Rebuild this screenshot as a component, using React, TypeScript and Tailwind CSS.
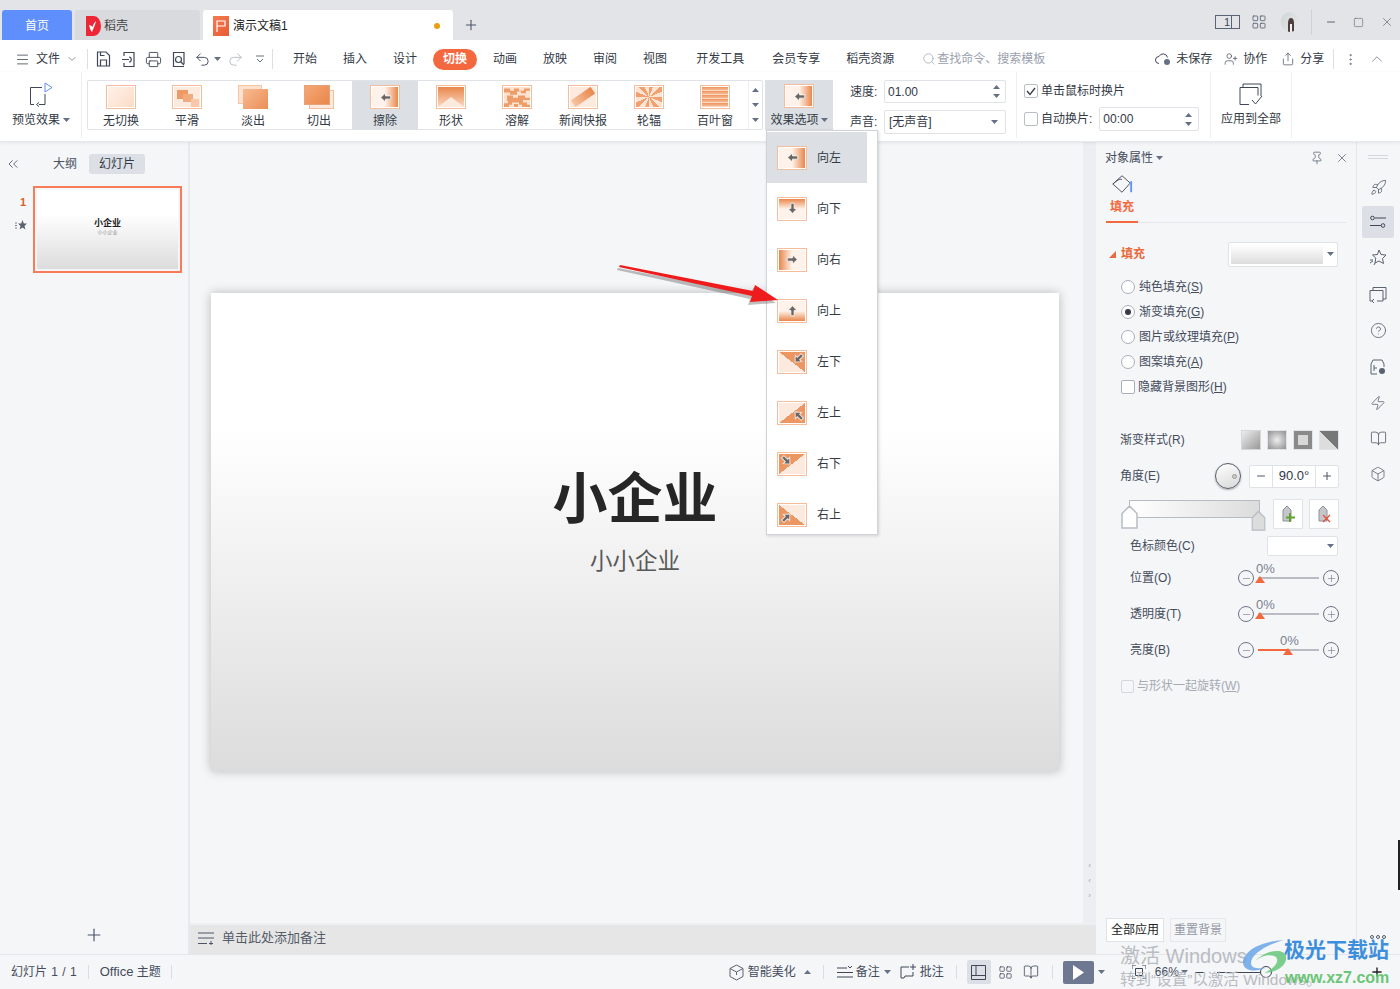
import type { ReactNode } from "react";
import {
  ChevronDown, ChevronUp, ChevronsLeft, Menu, Minus, Plus, Printer, Redo2, Search, Square, Undo2, X,
  UserPlus, Share, MoreVertical, Pin, Rocket, HelpCircle, Zap, Box, LayoutGrid, BookOpen,
} from "lucide-react";

const ICON = "#3f4757";

function Caret({ up, className = "" }: { up?: boolean; className?: string }) {
  return (
    <svg width="7" height="4" viewBox="0 0 7 4" className={className}>
      <path d={up ? "M0 4h7L3.5 0z" : "M0 0h7L3.5 4z"} fill="#667085" />
    </svg>
  );
}

function Thumb({ bg, children }: { bg: string; children?: ReactNode }) {
  return (
    <div className="w-[30px] h-[24px] border border-[#f5bd9b] bg-white p-px shrink-0">
      <div className={`w-full h-full relative flex items-center justify-center overflow-hidden ${bg}`}>{children}</div>
    </div>
  );
}

function Arrow({ rot }: { rot: string }) {
  return (
    <svg width="13" height="13" viewBox="0 0 16 16" className={rot}>
      <path d="M2 8 8 2.500v3.500h6.500v4H8v3.500z" fill="#6b6663" stroke="#fff" strokeOpacity=".8" strokeWidth="1.200" />
    </svg>
  );
}

const gallery: { label: string; thumb: ReactNode }[] = [
  { label: "无切换", thumb: <Thumb bg="bg-[linear-gradient(135deg,#fff1e8,#fbdcc8)]" /> },
  {
    label: "平滑",
    thumb: (
      <Thumb bg="bg-[#fdeadf]">
        <span className="absolute left-[3px] top-[3px] w-[11px] h-[9px] bg-[#ee9a66]" />
        <span className="absolute left-[9px] top-[7px] w-[10px] h-[8px] bg-[#f2ab7f]" />
        <span className="absolute left-[17px] top-[12px] w-[8px] h-[8px] bg-[#f8c8aa]" />
      </Thumb>
    ),
  },
  {
    label: "淡出",
    thumb: (
      <div className="relative w-[30px] h-[24px] shrink-0">
        <span className="absolute left-0 top-0 w-[24px] h-[19px] bg-[#fde1cf] border border-[#f7c4a4]" />
        <span className="absolute left-[5px] top-[4px] w-[25px] h-[20px] bg-[linear-gradient(135deg,#f8bb93,#ea8e55)]" />
      </div>
    ),
  },
  {
    label: "切出",
    thumb: (
      <div className="relative w-[30px] h-[24px] shrink-0">
        <span className="absolute left-[5px] top-[5px] w-[25px] h-[19px] bg-[#fdeadf] border border-[#f5bd9b]" />
        <span className="absolute left-0 top-0 w-[26px] h-[20px] bg-[linear-gradient(135deg,#f5a877,#e9874b)] border border-[#e9a178]" />
      </div>
    ),
  },
  { label: "擦除", thumb: <Thumb bg="bg-[linear-gradient(90deg,#fff2ea_50%,#e9874b)]"><Arrow rot="" /></Thumb> },
  {
    label: "形状",
    thumb: (
      <Thumb bg="bg-[linear-gradient(180deg,#e9874b,#fbd9c3)]">
        <svg width="26" height="20" viewBox="0 0 26 20" className="absolute inset-0"><path d="M0 20 13 10l13 10z" fill="#fdeadf" /></svg>
      </Thumb>
    ),
  },
  {
    label: "溶解",
    thumb: (
      <Thumb bg="bg-[#fde3d2]">
        <svg width="26" height="20" viewBox="0 0 26 26" preserveAspectRatio="none" className="absolute inset-0">
          <path d="M0 2h6v3h4V2h5v3h5V2h6v3h-4v3h-5V6h-4v4H6V7H0zM3 11h6v3h5v-3h7v3h5v3h-7v3h4v3h3v3h-8v-3h-3v-3H8v3H5v3H0v-5h4v-3H3zM10 22h4v4h-4z" fill="#ef9d68" />
        </svg>
      </Thumb>
    ),
  },
  {
    label: "新闻快报",
    thumb: (
      <Thumb bg="bg-[#fdeadf]">
        <span className="w-[24px] h-[8px] -rotate-[35deg] bg-[linear-gradient(90deg,#f8c4a3,#e9874b)]" />
      </Thumb>
    ),
  },
  {
    label: "轮辐",
    thumb: <Thumb bg="bg-[repeating-conic-gradient(#f2a070_0deg_22deg,#fde3d2_22deg_45deg)]" />,
  },
  {
    label: "百叶窗",
    thumb: <Thumb bg="bg-[repeating-linear-gradient(180deg,#ee945c_0px,#f6bb95_3px,#fff3ea_4px)]" />,
  },
];

const effects: { label: string; thumb: ReactNode }[] = [
  { label: "向左", thumb: <Thumb bg="bg-[linear-gradient(90deg,#fff2ea_50%,#e9874b)]"><Arrow rot="" /></Thumb> },
  { label: "向下", thumb: <Thumb bg="bg-[linear-gradient(0deg,#fff2ea_50%,#e9874b)]"><Arrow rot="-rotate-90" /></Thumb> },
  { label: "向右", thumb: <Thumb bg="bg-[linear-gradient(270deg,#fff2ea_50%,#e9874b)]"><Arrow rot="rotate-180" /></Thumb> },
  { label: "向上", thumb: <Thumb bg="bg-[linear-gradient(180deg,#fff2ea_50%,#e9874b)]"><Arrow rot="rotate-90" /></Thumb> },
  { label: "左下", thumb: <Thumb bg="bg-[linear-gradient(to_top_right,#fdeadf_50%,#ec9662_50%)]"><Arrow rot="-rotate-45 translate-x-[6px] -translate-y-[3px]" /></Thumb> },
  { label: "左上", thumb: <Thumb bg="bg-[linear-gradient(to_bottom_right,#fdeadf_50%,#ec9662_50%)]"><Arrow rot="rotate-45 translate-x-[6px] translate-y-[3px]" /></Thumb> },
  { label: "右下", thumb: <Thumb bg="bg-[linear-gradient(to_bottom_right,#ec9662_50%,#fdeadf_50%)]"><Arrow rot="rotate-[-135deg] -translate-x-[6px] -translate-y-[3px]" /></Thumb> },
  { label: "右上", thumb: <Thumb bg="bg-[linear-gradient(to_top_right,#ec9662_50%,#fdeadf_50%)]"><Arrow rot="rotate-[135deg] -translate-x-[6px] translate-y-[3px]" /></Thumb> },
];

function TabBar() {
  return (
    <div className="h-10 bg-[#e3e4e8] flex items-end shrink-0 relative pl-[2px]">
      <div className="w-[70px] h-[30px] pt-px bg-[#5f8efd] rounded-t-[3px] flex items-center justify-center text-white text-[12px]">首页</div>
      <div className="ml-[3px] w-[125px] h-[30px] pt-px bg-[#d9dade] rounded-t-[3px] flex items-center pl-[11px] gap-[3px] text-[12px] text-[#444]">
        <svg width="15" height="20" viewBox="0 0 15 20">
          <path d="M0 0h8a7 10 0 0 1 0 20H0z" fill="#ee2737" />
          <path d="M3 9c1 3 1 5 3 7 1-3 3-6 4-11-2 2-3 4-3.500 6-.5-1-2-2-3.500-2z" fill="#fff" />
        </svg>
        稻壳
      </div>
      <div className="ml-[3px] w-[250px] h-[30px] pt-px bg-white rounded-t-[3px] flex items-center pl-[10px] text-[12px] text-[#222]">
        <span className="w-4 h-[20px] bg-[linear-gradient(135deg,#f47b52,#e95b32)] flex items-center justify-center mr-[4px]">
          <svg width="10" height="12" viewBox="0 0 10 12"><path d="M1 12V1h8v5H1" fill="none" stroke="#fff" strokeWidth="1.200" /></svg>
        </span>
        演示文稿1
        <span className="ml-auto mr-[13px] w-[6px] h-[6px] rounded-full bg-[#e8a010]" />
      </div>
      <Plus size={16} color="#4b5468" strokeWidth={1.6} className="ml-[10px] mb-[7px]" />
      <div className="ml-auto h-10 flex items-center pr-[6px] pt-[4px]">
        <div className="relative w-[25px] h-[14px] border border-[#5b6475] text-[11px] leading-[12px] text-[#3f4757] pl-[8px] mr-[11px]">1<span className="absolute right-[3px] top-0 bottom-0 w-[5px] border-l border-[#5b6475]" /></div>
        <LayoutGrid size={16} color="#5b6475" strokeWidth={1.3} className="mr-[14px]" />
        <div className="w-[18px] h-[20px] rounded-full bg-[linear-gradient(120deg,#cfd5d6,#e7ebea)] flex items-end justify-center overflow-hidden mr-[12px]">
          <svg width="12" height="15" viewBox="0 0 12 15">
            <path d="M4 15V6c0-3 1-5 3-5s3 2 3 5v9H8V7H6v8z" fill="#4e403e" />
            <path d="M6 15V7h2v8z" fill="#f4f1ee" />
          </svg>
        </div>
        <span className="w-px h-[26px] bg-[#d0d2d8] mr-[13px]" />
        <Minus size={12} color="#5b6475" className="mr-[16px]" />
        <Square size={11} color="#5b6475" strokeWidth={1.3} className="mr-[16px]" />
        <X size={14} color="#5b6475" strokeWidth={1.2} />
      </div>
    </div>
  );
}

function MenuBar() {
  const tabs = ["开始", "插入", "设计", "切换", "动画", "放映", "审阅", "视图"];
  return (
    <div className="h-8 pt-[6px] bg-white flex items-center shrink-0 text-[12px] text-[#333a46]">
      <Menu size={15} color={ICON} strokeWidth={1.3} className="ml-[15px]" />
      <span className="ml-[6px]">文件</span>
      <ChevronDown size={12} color="#8a93a3" className="ml-[6px]" />
      <span className="ml-[9px] w-px h-5 bg-[#dcdfe4]" />
      <svg width="15" height="16" viewBox="0 0 15 16" className="ml-[8px]" fill="none" stroke={ICON} strokeWidth="1.200">
        <path d="M1.500 1h8.500l3.500 3.500V15h-12zM4.500 15V9h6v6M4.500 1v3.500h4" />
      </svg>
      <svg width="16" height="17" viewBox="0 0 16 17" className="ml-[10px]" fill="none" stroke={ICON} strokeWidth="1.200">
        <path d="M3 5V1.500h10v14H3V12M1 8.500h7M8 6c3 0 3 5 0 5" />
      </svg>
      <Printer size={17} color={ICON} strokeWidth={1.3} className="ml-[8px]" />
      <svg width="16" height="17" viewBox="0 0 16 17" className="ml-[9px]" fill="none" stroke={ICON} strokeWidth="1.200">
        <path d="M13 13V1.500H2.500v14H13" /><circle cx="7.500" cy="8.500" r="3" /><path d="m10 11 3 3" />
      </svg>
      <Undo2 size={17} color={ICON} strokeWidth={1.3} className="ml-[7px]" />
      <Caret className="ml-[3px]" />
      <Redo2 size={17} color="#b4b9c2" strokeWidth={1.3} className="ml-[6px]" />
      <svg width="8" height="8" viewBox="0 0 8 8" className="ml-[12px]" fill="none" stroke="#667085"><path d="M0 1h8M1 4l3 3 3-3" /></svg>
      <span className="ml-[8px] w-px h-5 bg-[#dcdfe4]" />
      <div className="ml-[20px] flex items-center gap-[26px]">
        {tabs.map((t) =>
          t === "切换" ? (
            <span key={t} className="-mx-[10px] w-[44px] h-[21px] rounded-full bg-[#f4683f] text-white font-bold flex items-center justify-center">{t}</span>
          ) : (
            <span key={t}>{t}</span>
          ),
        )}
      </div>
      <span className="ml-[29px]">开发工具</span>
      <span className="ml-[28px]">会员专享</span>
      <span className="ml-[26px]">稻壳资源</span>
      <Search size={14} color="#9aa1ad" strokeWidth={1.2} className="ml-[28px]" />
      <span className="ml-px text-[#9aa1ad]">查找命令、搜索模板</span>
      <svg width="16" height="14" viewBox="0 0 16 14" className="ml-[110px]" fill="none" stroke={ICON}>
        <path d="M4 11.500a3.500 3.500 0 0 1 0-7 4.500 4.500 0 0 1 8.500 1" /><circle cx="12" cy="10" r="3" fill="#667085" stroke="none" />
      </svg>
      <span className="ml-[5px]">未保存</span>
      <UserPlus size={14} color={ICON} strokeWidth={1.2} className="ml-[12px]" />
      <span className="ml-[5px]">协作</span>
      <Share size={14} color={ICON} strokeWidth={1.2} className="ml-[14px]" />
      <span className="ml-[5px]">分享</span>
      <span className="ml-[9px] w-px h-5 bg-[#dcdfe4]" />
      <MoreVertical size={15} color="#667085" strokeWidth={1.4} className="ml-[9px]" />
      <ChevronUp size={18} color="#667085" strokeWidth={1} className="ml-[10px]" />
    </div>
  );
}

function Spin({ className = "" }: { className?: string }) {
  return (
    <span className={`flex flex-col gap-[5px] ${className}`}>
      <Caret up />
      <Caret />
    </span>
  );
}

function Ribbon() {
  return (
    <div className="h-[70px] bg-white flex shrink-0 text-[12px] text-[#333a46] border-b border-[#e8e9ed] shadow-[0_1px_3px_rgba(0,0,0,0.08)] relative z-10">
      <div className="w-[82px] h-[66px] flex flex-col items-center border-r border-[#eceef1]">
        <svg width="26" height="26" viewBox="0 0 26 26" className="mt-[10px]" fill="none" stroke={ICON}>
          <path d="M14 5.500H2.500v17H6M17 12v10.500h-6" /><path d="m11 20.500-2.500 2 2.500 2" /><path d="M17 1v9l7-4.500z" stroke="#5f8efd" />
        </svg>
        <span className="mt-[3px] flex items-center gap-[3px] pl-px">预览效果<Caret /></span>
      </div>
      <div className="ml-[5px] mt-2 w-[676px] h-[50px] border border-[#dfe2e6] rounded-[2px] flex overflow-hidden">
        {gallery.map((g) => (
          <div key={g.label} className={`w-[66px] h-full shrink-0 flex flex-col items-center pt-1 ${g.label === "擦除" ? "bg-[#dce0e4]" : ""}`}>
            {g.thumb}
            <span className="mt-1 whitespace-nowrap leading-[16px]">{g.label}</span>
          </div>
        ))}
        <div className="ml-auto w-[14px] border-l border-[#eceef1] flex flex-col items-center justify-around py-[2px]">
          <Caret up />
          <Caret />
          <Caret />
        </div>
      </div>
      <div className="ml-[2px] mt-2 w-[68px] h-[50px] bg-[#dce0e4] flex flex-col items-center pt-1">
        <Thumb bg="bg-[linear-gradient(90deg,#fff2ea_50%,#e9874b)]"><Arrow rot="" /></Thumb>
        <span className="mt-1 flex items-center gap-[2px] leading-[16px]">效果选项<Caret /></span>
      </div>
      <div className="ml-[12px] w-[172px] h-[66px] border-r border-[#eceef1] pl-[5px] pt-2 flex flex-col gap-[7px]">
        <div className="flex items-center gap-[2px]">
          <span className="w-[32px]">速度:</span>
          <div className="w-[122px] h-[23px] border border-[#dfe2e6] rounded-[2px] flex items-center px-[3px] text-[#333a46]">
            01.00<Spin className="ml-auto mr-[2px]" />
          </div>
        </div>
        <div className="flex items-center gap-[2px]">
          <span className="w-[32px]">声音:</span>
          <div className="w-[122px] h-[24px] border border-[#dfe2e6] rounded-[2px] flex items-center px-[4px]">
            [无声音]<Caret className="ml-auto mr-[3px]" />
          </div>
        </div>
      </div>
      <div className="w-[194px] h-[66px] border-r border-[#eceef1] pl-[7px] pt-[9px] flex flex-col gap-[6px]">
        <div className="h-[20px] flex items-center gap-[3px]">
          <span className="w-[14px] h-[14px] border border-[#b9bec7] rounded-[2px] flex items-center justify-center">
            <svg width="10" height="9" viewBox="0 0 10 9" fill="none" stroke="#333a46" strokeWidth="1.300"><path d="m1 4 3 3.500L9 1" /></svg>
          </span>
          单击鼠标时换片
        </div>
        <div className="h-[24px] flex items-center gap-[3px]">
          <span className="w-[14px] h-[14px] border border-[#b9bec7] rounded-[2px]" />
          自动换片:
          <div className="ml-[4px] w-[100px] h-[24px] border border-[#dfe2e6] rounded-[2px] flex items-center px-[3px]">
            00:00<Spin className="ml-auto mr-[3px]" />
          </div>
        </div>
      </div>
      <div className="w-[81px] h-[66px] border-r border-[#eceef1] flex flex-col items-center pt-[10px]">
        <svg width="26" height="26" viewBox="0 0 26 26" fill="none" stroke={ICON}>
          <path d="M5 5V2h18v12M2 5.500h18v8M2 5.500v17h9" /><path d="m14 18 3.500 4L24 14" />
        </svg>
        <span className="mt-[2px]">应用到全部</span>
      </div>
    </div>
  );
}

function LeftPanel() {
  return (
    <div className="w-[190px] shrink-0 border-r-2 border-[#e8e9ee] flex flex-col text-[12px] text-[#4a5263]">
      <div className="h-[44px] flex items-center">
        <ChevronsLeft size={16} color="#3f4757" strokeWidth={1.2} className="ml-[5px]" />
        <span className="ml-[32px]">大纲</span>
        <span className="ml-[12px] w-[56px] h-[20px] bg-[#dce0e6] rounded-[3px] flex items-center justify-center text-[#333a46]">幻灯片</span>
      </div>
      <div className="flex">
        <div className="w-[33px] flex flex-col items-end pr-[6px] pt-[9px] gap-[11px]">
          <span className="font-bold text-[#d6611f] text-[11px] leading-[14px] pr-[1px]">1</span>
          <svg width="12" height="11" viewBox="0 0 12 11">
            <path d="m7.500 0 1.300 3.400 3.200.2-2.500 2.300.9 3.600-2.900-2-2.900 2 .9-3.600L3 3.600l3.200-.2z" fill="#5a6270" />
            <path d="M0 3h2M0 5.500h2M0 8h2" stroke="#5a6270" strokeWidth=".8" />
          </svg>
        </div>
        <div className="w-[149px] h-[87px] border-2 border-[#f97b58] p-[2px]">
          <div className="w-full h-full bg-[linear-gradient(180deg,#fff_30%,#dcdcdc)] flex flex-col items-center pt-[28px]">
            <span className="text-[9px] leading-[10px] font-bold text-[#222]">小企业</span>
            <span className="text-[5px] leading-[8px] text-[#888]">小小企业</span>
          </div>
        </div>
      </div>
      <div className="mt-auto h-[29px] flex justify-center items-start">
        <Plus size={20} color="#4b5468" strokeWidth={1.4} />
      </div>
    </div>
  );
}

function Slide() {
  return (
    <div className="flex-1 flex flex-col min-w-0 bg-[#f5f6f8]">
      <div className="flex-1 flex min-h-0">
        <div className="flex-1 pt-[151px] pl-[21px]">
          <div className="w-[848px] h-[478px] bg-[linear-gradient(180deg,#fff_28%,#dcdcdc)] shadow-[0_0_10px_rgba(0,0,0,0.25)] flex flex-col items-center pt-[171px]">
            <span className="text-[55px] leading-[70px] font-bold text-[#262626]">小企业</span>
            <span className="mt-[13px] text-[22.500px] leading-[30px] text-[#595959]">小小企业</span>
          </div>
        </div>
        <div className="w-[13px] bg-[#eceef2] flex flex-col items-center justify-end pb-[20px] text-[#a0a6b0] text-[8px] leading-[15px]">
          <span>‹</span><span>‹</span><span>›</span>
        </div>
      </div>
      <div className="h-[31px] pb-[3px] bg-[#e6e6e6] border-t-2 border-[#eeeff2] flex items-center pl-[8px] text-[13px] text-[#555c68]">
        <svg width="16" height="13" viewBox="0 0 16 13" fill="none" stroke="#4b5468"><path d="M0 1h16M0 6h16M0 11.500h9M13 9v4M11 11.500h4" /></svg>
        <span className="ml-[8px]">单击此处添加备注</span>
      </div>
    </div>
  );
}

function Radio({ on, children }: { on?: boolean; children: ReactNode }) {
  return (
    <div className="h-[25px] flex items-center">
      <span className="w-[14px] h-[14px] border border-[#a9aeb8] rounded-full bg-white flex items-center justify-center">
        {on && <span className="w-[6px] h-[6px] rounded-full bg-[#333a46]" />}
      </span>
      <span className="ml-[4px]">{children}</span>
    </div>
  );
}

function Stop({ fill }: { fill: string }) {
  return (
    <svg width="17" height="24" viewBox="0 0 17 24" className="shrink-0">
      <path d="M1 23V8.500L8.500 1 16 8.500V23z" fill={fill} stroke="#b8bcc2" strokeWidth="1.500" />
    </svg>
  );
}

function Sym({ c }: { c: ReactNode }) {
  return <span className="w-[16px] h-[16px] rounded-full border border-[#6b7488] flex items-center justify-center shrink-0">{c}</span>;
}

function SliderRow({ label, pos, fill }: { label: string; pos: number; fill?: boolean }) {
  return (
    <div className="h-[36px] flex items-center pl-[34px]">
      <span className="w-[108px]">{label}</span>
      <Sym c={<Minus size={11} color="#6b7488" strokeWidth={1.3} />} />
      <div className="relative w-[61px] h-[2px] bg-[#b9bcc4] mx-1">
        {fill && <span className="absolute left-0 top-0 h-full bg-[#f4683f]" style={{ width: pos }} />}
        <span className="absolute -top-[15px] text-[13px] text-[#7a8190] leading-[13px]" style={{ left: fill ? pos - 8 : pos - 4 }}>0%</span>
        <span className="absolute -top-px w-0 h-0 border-x-[5px] border-x-transparent border-b-[7px] border-b-[#f4683f]" style={{ left: pos - 5 }} />
      </div>
      <Sym c={<Plus size={11} color="#6b7488" strokeWidth={1.3} />} />
    </div>
  );
}

function RightPanel() {
  return (
    <div className="w-[261px] shrink-0 border-r border-[#e4e6ea] flex flex-col text-[12px] text-[#444c5c]">
      <div className="h-[31px] flex items-center pl-[9px] pt-[1px]">
        <span>对象属性</span>
        <Caret className="ml-[3px]" />
        <Pin size={14} color="#4b5468" strokeWidth={1.2} className="ml-auto" />
        <X size={14} color="#4b5468" strokeWidth={1.2} className="ml-[11px] mr-[7px]" />
      </div>
      <div className="ml-[10px] mr-[10px] border-b border-[#e4e6ea] h-[50px]">
        <div className="w-[32px] h-[50px] border-b-2 border-[#f4683f] flex flex-col items-center relative">
          <svg width="22" height="22" viewBox="0 0 24 24" fill="none" stroke={ICON}>
            <path d="M2 12 12 3l9 8-9 10z" /><path d="M2 12c5-4 7-6 10-5" /><path d="M22 9v12" stroke="#5f8efd" strokeWidth="2" />
          </svg>
          <span className="text-[#f4683f] font-bold mt-[4px] leading-[16px]">填充</span>
        </div>
      </div>
      <div className="h-[44px] mt-[9px] flex items-center pl-[13px]">
        <span className="w-0 h-0 border-l-[7px] border-l-transparent border-b-[7px] border-b-[#ea6a3c]" />
        <span className="ml-[5px] font-bold text-[#ea6a3c]">填充</span>
        <div className="ml-[83px] w-[110px] h-[25px] border border-[#dfe2e6] rounded-[2px] bg-white flex items-center pl-[2px]">
          <span className="w-[92px] h-[19px] bg-[linear-gradient(180deg,#fff,#dcdcdc)]" />
          <Caret className="ml-[4px]" />
        </div>
      </div>
      <div className="pl-[25px] -mt-[2px]">
        <Radio>纯色填充(<u>S</u>)</Radio>
        <Radio on>渐变填充(<u>G</u>)</Radio>
        <Radio>图片或纹理填充(<u>P</u>)</Radio>
        <Radio>图案填充(<u>A</u>)</Radio>
        <div className="h-[25px] flex items-center">
          <span className="w-[14px] h-[14px] border border-[#a9aeb8] rounded-[2px] bg-white" />
          <span className="ml-[3px]">隐藏背景图形(<u>H</u>)</span>
        </div>
      </div>
      <div className="mt-[25px] h-[32px] flex items-center pl-[24px]">
        <span className="w-[121px]">渐变样式(R)</span>
        <div className="flex gap-[6px]">
          <span className="w-[20px] h-[20px] bg-[linear-gradient(135deg,#eee,#999)] border border-[#d5d7db]" />
          <span className="w-[20px] h-[20px] bg-[radial-gradient(circle,#eee,#8e8e8e)] border border-[#e2e3e6]" />
          <span className="w-[20px] h-[20px] bg-[#8a8a8a] border border-[#e2e3e6] flex items-center justify-center"><span className="w-[10px] h-[10px] bg-[#d8d8d8]" /></span>
          <span className="w-[20px] h-[20px] bg-[linear-gradient(45deg,#ddd_50%,#777_50%)] border border-[#e2e3e6]" />
        </div>
      </div>
      <div className="mt-[2px] h-[36px] flex items-center pl-[24px]">
        <span className="w-[95px]">角度(E)</span>
        <span className="w-[26px] h-[26px] rounded-full border border-[#555c68] bg-[linear-gradient(160deg,#fff,#d8d8d8)] shadow-[0_1px_2px_rgba(0,0,0,0.3)] flex items-center justify-end pr-[3px]">
          <span className="w-[5px] h-[5px] rounded-full border border-[#999] bg-[#ccc]" />
        </span>
        <div className="ml-[8px] w-[90px] h-[23px] border border-[#dfe2e6] rounded-[2px] bg-white flex items-center text-[13px] text-[#333a46]">
          <span className="w-[23px] flex justify-center border-r border-[#dfe2e6] h-full items-center"><Minus size={12} color="#555c68" strokeWidth={2.2} /></span>
          <span className="flex-1 text-center">90.0°</span>
          <span className="w-[23px] flex justify-center border-l border-[#dfe2e6] h-full items-center"><Plus size={12} color="#555c68" strokeWidth={2.2} /></span>
        </div>
      </div>
      <div className="mt-[5px] h-[31px] flex items-start pl-[25px]">
        <div className="relative w-[144px] h-[30px]">
          <div className="absolute left-[8px] right-[5px] top-[1px] h-[18px] border border-[#b8bcc2] bg-[linear-gradient(90deg,#fff,#dcdcdc)]" />
          <span className="absolute left-0 top-[6px]"><Stop fill="#fff" /></span>
          <span className="absolute right-[-2px] top-[8px] scale-[.85] origin-bottom"><Stop fill="#dcdcdc" /></span>
        </div>
        <span className="ml-[8px] w-[30px] h-[30px] border border-[#e2e4e8] bg-white flex items-center justify-center relative">
          <svg width="14" height="20" viewBox="0 0 14 20"><path d="M2 17V6l4-4 4 4v11z" fill="#c4c6ca" stroke="#8e9298" /><path d="M9 9v9M5 13.500h9" stroke="#5ea32d" strokeWidth="2" /></svg>
        </span>
        <span className="ml-[6px] w-[30px] h-[30px] border border-[#e2e4e8] bg-white flex items-center justify-center">
          <svg width="14" height="20" viewBox="0 0 14 20"><path d="M2 17V6l4-4 4 4v11z" fill="#c4c6ca" stroke="#8e9298" /><path d="m6 11 7 7M13 11l-7 7" stroke="#ee4b35" strokeWidth="1.300" /></svg>
        </span>
      </div>
      <div className="mt-[5px] h-[21px] flex items-center pl-[34px]">
        <span className="w-[137px]">色标颜色(C)</span>
        <div className="w-[71px] h-[20px] border border-[#dfe2e6] rounded-[2px] bg-white flex items-center justify-end pr-[3px]"><Caret /></div>
      </div>
      <div className="mt-[4px]">
        <SliderRow label="位置(O)" pos={2} />
        <SliderRow label="透明度(T)" pos={2} />
        <SliderRow label="亮度(B)" pos={30} fill />
      </div>
      <div className="mt-[8px] h-[20px] flex items-center pl-[25px] text-[#a5aab3]">
        <span className="w-[13px] h-[13px] border border-[#d5d7dc] rounded-[2px]" />
        <span className="ml-[3px]">与形状一起旋转(<u>W</u>)</span>
      </div>
      <div className="mt-auto mb-[12px] flex pl-[10px] gap-[6px]">
        <span className="w-[58px] h-[24px] border border-[#dfe2e6] bg-white flex items-center justify-center text-[#222]">全部应用</span>
        <span className="w-[56px] h-[24px] border border-[#e6e8eb] flex items-center justify-center text-[#9399a4]">重置背景</span>
      </div>
    </div>
  );
}

function SideRail() {
  return (
    <div className="w-[43px] shrink-0 flex flex-col items-center pr-[1px] pt-[13px] pb-[15px] relative">
      <span className="w-[20px] h-[4px] border-y border-[#d5d7dc]" />
      <div className="mt-[9px] flex flex-col items-center gap-0">
        <div className="h-[38px] flex items-center"><Rocket size={17} color="#5a6270" strokeWidth={1.2} /></div>
        <div className="h-[32px] w-[32px] bg-[#dce0e6] rounded-[2px] flex items-center justify-center">
          <svg width="16" height="14" viewBox="0 0 16 14" fill="none" stroke="#3f4757">
            <circle cx="2.500" cy="3" r="1.800" /><path d="M5 3h11M0 10.500h11" /><circle cx="13" cy="10.500" r="1.800" />
          </svg>
        </div>
        <div className="h-[38px] flex items-center">
          <svg width="18" height="18" viewBox="0 0 18 18" fill="none" stroke="#5a6270"><path d="m10 2 2 4.500 5 .5-3.500 3.500 1 5L10 13l-4 2 .8-5L3.500 7l5-.5zM1 12h3M1 15l3-2M5 17l1-2" /></svg>
        </div>
        <div className="h-[36px] flex items-center">
          <svg width="18" height="17" viewBox="0 0 18 17" fill="none" stroke="#5a6270"><path d="M4 4V1.500h13V13h-3M1 4.500h13V15H8M1 4.500V15h2M5 13l-2 2 2 2" /></svg>
        </div>
        <div className="h-[37px] flex items-center"><HelpCircle size={17} color="#5a6270" strokeWidth={1.2} /></div>
        <div className="h-[36px] flex items-center">
          <svg width="18" height="16" viewBox="0 0 18 16" fill="none" stroke="#5a6270"><path d="M8 15H2V5l2-4h9l2 4v3M5 6v6M8 9H5" /><circle cx="13" cy="12" r="3" fill="#5a6270" stroke="none" /></svg>
        </div>
        <div className="h-[35px] flex items-center"><Zap size={16} color="#5a6270" strokeWidth={1.2} /></div>
        <div className="h-[36px] flex items-center"><BookOpen size={17} color="#5a6270" strokeWidth={1.2} /></div>
        <div className="h-[36px] flex items-center"><Box size={16} color="#5a6270" strokeWidth={1.2} /></div>
      </div>
      <div className="mt-auto flex gap-[2px]">
        <span className="w-[4px] h-[4px] rounded-full border border-[#555c68]" />
        <span className="w-[4px] h-[4px] rounded-full border border-[#555c68]" />
        <span className="w-[4px] h-[4px] rounded-full border border-[#555c68]" />
      </div>
      <span className="absolute right-0 top-[698px] w-[2px] h-[50px] bg-[#222]" />
    </div>
  );
}

function StatusBar() {
  return (
    <div className="h-[35px] shrink-0 border-t border-[#e4e6ea] flex items-center text-[12px] text-[#444c5c] bg-[#f5f6f8]">
      <span className="ml-[11px] [word-spacing:1px]">幻灯片 1 / 1</span>
      <span className="ml-[11px] w-px h-[14px] bg-[#dcdfe4]" />
      <span className="ml-[11px]"><span className="text-[13px]">Office</span> 主题</span>
      <span className="ml-[10px] w-px h-[14px] bg-[#dcdfe4]" />
      <svg width="15" height="17" viewBox="0 0 15 17" className="ml-[557px]" fill="none" stroke="#5a6270"><path d="M7.500 1 14 4.500v8L7.500 16 1 12.500v-8zM1 4.500l6.500 3.500L14 4.500M7.500 8v3" /></svg>
      <span className="ml-[4px]">智能美化</span>
      <Caret up className="ml-[8px]" />
      <span className="ml-[12px] w-px h-[14px] bg-[#dcdfe4]" />
      <svg width="17" height="14" viewBox="0 0 17 14" className="ml-[13px]" fill="none" stroke="#3f4757"><path d="M0 3h10M0 7.500h16M0 12h16M11 1l2 2 2-2" /></svg>
      <span className="ml-[2px]">备注</span>
      <Caret className="ml-[4px]" />
      <svg width="16" height="16" viewBox="0 0 16 16" className="ml-[9px]" fill="none" stroke="#3f4757"><path d="M9 3H1v11h3l1-2h8V8M13 0v6M10 3h6" /></svg>
      <span className="ml-[4px]">批注</span>
      <span className="ml-[12px] w-px h-[14px] bg-[#dcdfe4]" />
      <span className="ml-[10px] w-[24px] h-[24px] bg-[#dce0e6] rounded-[2px] flex items-center justify-center">
        <svg width="15" height="15" viewBox="0 0 15 15" fill="none" stroke="#3f4757"><path d="M.5.5h14v14H.5zM5 .5v10M.5 10.500h14" /></svg>
      </span>
      <LayoutGrid size={15} color="#3f4757" strokeWidth={1.2} className="ml-[7px]" />
      <BookOpen size={16} color="#3f4757" strokeWidth={1.2} className="ml-[10px]" />
      <span className="ml-[13px] w-px h-[14px] bg-[#dcdfe4]" />
      <span className="ml-[10px] w-[31px] h-[23px] bg-[#6e7891] rounded-[2px] flex items-center justify-center">
        <svg width="11" height="15" viewBox="0 0 11 15"><path d="M0 0v15l11-7.500z" fill="#fff" /></svg>
      </span>
      <Caret className="ml-[4px]" />
      <svg width="14" height="14" viewBox="0 0 14 14" className="ml-[27px]" fill="none" stroke="#3f4757"><path d="M0 4V0h4M10 0h4v4M14 10v4h-4M4 14H0v-4M3.500 3.500h7v7h-7z" /></svg>
      <span className="ml-[9px]">66%</span>
      <Caret className="ml-[2px]" />
      <Minus size={13} color="#3f4757" strokeWidth={2} className="ml-[5px]" />
      <span className="ml-[11px] w-[43px] h-px bg-[#3f4757]" />
      <span className="w-[12px] h-[12px] rounded-full border border-[#3f4757]" />
      <Plus size={14} color="#222" strokeWidth={2.4} className="ml-[98px]" />
    </div>
  );
}

function Dropdown() {
  return (
    <div className="absolute left-[766px] top-[130px] z-20 w-[112px] h-[405px] bg-white border border-[#d0d3d8] shadow-[1px_1px_3px_rgba(0,0,0,0.15)] pt-[1px] text-[12px] text-[#333a46]">
      {effects.map((e, i) => (
        <div key={e.label} className={`w-[100px] h-[51px] flex items-center pl-[10px] gap-[10px] ${i === 0 ? "bg-[#dce0e4]" : ""}`}>
          {e.thumb}
          <span>{e.label}</span>
        </div>
      ))}
    </div>
  );
}

export default function App() {
  return (
    <div className="relative w-[1400px] h-[989px] overflow-hidden flex flex-col bg-[#f5f6f8] font-['Liberation_Sans','Noto_Sans_CJK_SC',sans-serif]">
      <TabBar />
      <MenuBar />
      <Ribbon />
      <div className="flex-1 flex min-h-0">
        <LeftPanel />
        <Slide />
        <RightPanel />
        <SideRail />
      </div>
      <StatusBar />
      <Dropdown />

      {/* red arrow over the slide */}
      <svg width="170" height="50" viewBox="0 0 170 50" className="absolute left-[615px] top-[262px] z-30">
        <path d="M4 5 137 34l-2 6 28-2-23-15-2 6L5 3z" fill="#000" opacity=".25" transform="translate(-2 3)" />
        <path d="M4 5 137 34l-2 6 28-2-23-15-2 6L5 3z" fill="#ee1c1c" />
      </svg>

      {/* windows activation note and site logo over the bottom corner */}
      <div className="absolute left-[1120px] top-[943px] z-30 text-[20px] leading-[26px] text-[#b9bcc2] whitespace-nowrap">激活 Windows</div>
      <div className="absolute left-[1120px] top-[971px] z-30 text-[15.500px] leading-[18px] text-[#b9bcc2] whitespace-nowrap">转到“设置”以激活 Windows。</div>
      <svg width="50" height="44" viewBox="0 0 50 44" className="absolute left-[1240px] top-[938px] z-30" fill="none">
        <path d="M44 2C22 3 4 12 3 24c0 10 14 10 22 6-8 1-14 0-14-5C11 16 28 6 44 2z" fill="#6aa5e8" opacity=".85" />
        <path d="M14 24c6-6 16-9 22-5 4 4-2 12-12 16 12 0 24-8 22-17-2-8-20-7-32 6z" fill="#66c77a" opacity=".85" />
      </svg>
      <div className="absolute left-[1284px] top-[936px] z-30 text-[21px] leading-[28px] font-bold text-[#3d8fdc] whitespace-nowrap">极光下载站</div>
      <div className="absolute left-[1285px] top-[967px] z-30 text-[16px] leading-[22px] font-bold text-[#5cc168] whitespace-nowrap opacity-90">www.xz7.com</div>
    </div>
  );
}
